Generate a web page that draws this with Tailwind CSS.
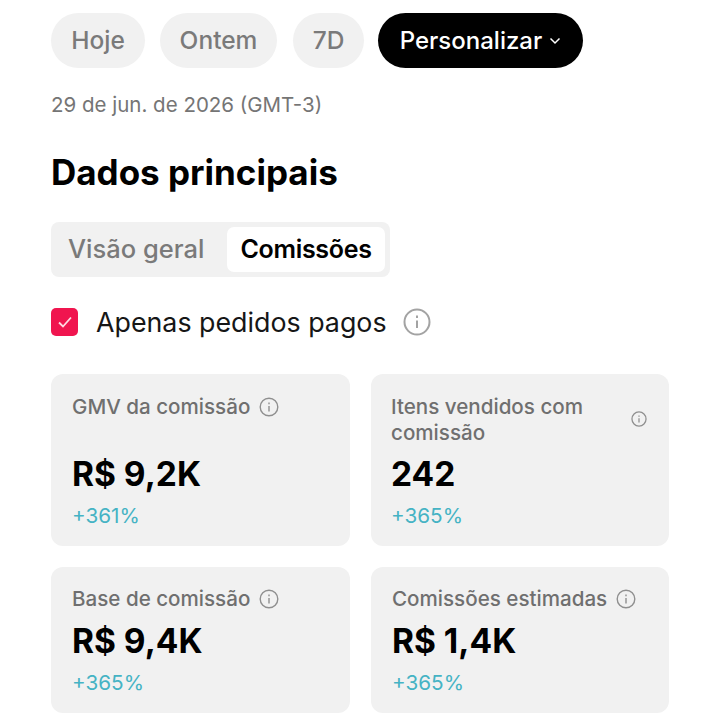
<!DOCTYPE html>
<html lang="en">
<head>
    <meta charset="UTF-8">
    <meta name="viewport" content="width=device-width, initial-scale=1.0">
    <title>Dados principais</title>
    <script src="https://cdn.jsdelivr.net/npm/@tailwindcss/browser@4"></script>
</head>
<body class="bg-white font-['Inter',sans-serif] overflow-hidden">
    <div class="w-[720px] h-[720px] pl-[51px] pr-[51px] pt-[13px] overflow-hidden">
        <!-- Date filters -->
        <div class="flex items-center h-[55px] text-[24.5px] font-medium text-[#7a7a7a]">
            <div class="w-[94px] h-full rounded-full bg-[#f1f1f1] flex items-center justify-center">Hoje</div>
            <div class="w-[117px] h-full rounded-full bg-[#f1f1f1] flex items-center justify-center ml-[15px]">Ontem</div>
            <div class="w-[71px] h-full rounded-full bg-[#f1f1f1] flex items-center justify-center ml-[16px]">7D</div>
            <div class="w-[205px] h-full rounded-full bg-black text-white text-[24px] flex items-center justify-center gap-[7px] ml-[14px]">
                Personalizar
                <svg width="12" height="8" viewBox="0 0 12 8" fill="none" stroke="white" stroke-width="1.5"><path d="M1.5 1.5 6 6l4.5-4.5"/></svg>
            </div>
        </div>
        <p class="mt-[25px] text-[20.5px] leading-[24px] text-[#757575]">29 de jun. de 2026 (GMT-3)</p>

        <h1 class="mt-[35px] text-[35px] leading-[40px] font-bold text-black">Dados principais</h1>

        <!-- Tabs -->
        <div class="mt-[30px] w-[339px] h-[55px] rounded-[8px] bg-[#f1f1f1] flex items-center pl-[17px] pr-[5px] justify-between text-[25.5px] font-medium">
            <span class="text-[#7a7a7a]">Visão geral</span>
            <span class="w-[158px] h-[45px] rounded-[7px] bg-white text-black text-[25px] font-semibold tracking-[-0.3px] flex items-center justify-center">Comissões</span>
        </div>

        <!-- Paid orders only -->
        <div class="mt-[31px] flex items-center h-[28px]">
            <div class="w-[27px] h-[28px] rounded-[5px] bg-[#f0154f] flex items-center justify-center">
                <svg width="16" height="14" viewBox="0 0 16 14" fill="none" stroke="#ffd9e2" stroke-width="1.8"><path d="M2 7.5 6 11.5 14 2.5"/></svg>
            </div>
            <span class="ml-[18px] text-[26.8px] text-[#161616]">Apenas pedidos pagos</span>
            <svg class="ml-[16px]" width="28" height="28" viewBox="0 0 28 28" fill="none" stroke="#a3a3a3" stroke-width="2"><circle cx="14" cy="14" r="12.5"/><path d="M14 12.5v7.5"/><path d="M14 7.5v2.5"/></svg>
        </div>

        <!-- Metric cards -->
        <div class="mt-[38px] grid grid-cols-[299px_298px] gap-x-[21px] gap-y-[21px]">
            <div class="h-[172px] rounded-[12px] bg-[#f1f1f1] pl-[21px] pr-[21px] pt-[20px]">
                <div class="flex items-center h-[26px] text-[20.6px] font-medium text-[#6f6f6f]">
                    GMV da comissão
                    <svg class="ml-[9px]" width="20" height="20" viewBox="0 0 20 20" fill="none" stroke="#8f8f8f" stroke-width="1.4"><circle cx="10" cy="10" r="8.8"/><path d="M10 9v5.5"/><path d="M10 5.5v1.8"/></svg>
                </div>
                <div class="mt-[31px] text-[33.5px] leading-[46px] font-bold text-black">R$ 9,2K</div>
                <div class="mt-[6px] text-[20.7px] leading-[26px] text-[#45b3c4]">+361%</div>
            </div>
            <div class="h-[172px] rounded-[12px] bg-[#f1f1f1] pl-[20px] pr-[21px] pt-[20px]">
                <div class="flex items-center justify-between text-[20.6px] leading-[26px] font-medium text-[#6f6f6f]">
                    <span class="w-[215px]">Itens vendidos com comissão</span>
                    <svg class="-mt-[3px] mr-[1px]" width="16" height="16" viewBox="0 0 20 20" fill="none" stroke="#8f8f8f" stroke-width="1.6"><circle cx="10" cy="10" r="8.8"/><path d="M10 9v5.5"/><path d="M10 5.5v1.8"/></svg>
                </div>
                <div class="mt-[5px] text-[33.5px] leading-[46px] font-bold text-black">242</div>
                <div class="mt-[6px] text-[20.7px] leading-[26px] text-[#45b3c4]">+365%</div>
            </div>
            <div class="h-[146px] rounded-[12px] bg-[#f1f1f1] pl-[21px] pr-[21px] pt-[19px]">
                <div class="flex items-center h-[26px] text-[20.6px] font-medium text-[#6f6f6f]">
                    Base de comissão
                    <svg class="ml-[9px]" width="20" height="20" viewBox="0 0 20 20" fill="none" stroke="#8f8f8f" stroke-width="1.4"><circle cx="10" cy="10" r="8.8"/><path d="M10 9v5.5"/><path d="M10 5.5v1.8"/></svg>
                </div>
                <div class="mt-[6px] text-[33.5px] leading-[46px] font-bold text-black">R$ 9,4K</div>
                <div class="mt-[6px] text-[20.7px] leading-[26px] text-[#45b3c4]">+365%</div>
            </div>
            <div class="h-[146px] rounded-[12px] bg-[#f1f1f1] pl-[21px] pr-[21px] pt-[19px]">
                <div class="flex items-center h-[26px] text-[20.6px] font-medium text-[#6f6f6f]">
                    Comissões estimadas
                    <svg class="ml-[9px]" width="20" height="20" viewBox="0 0 20 20" fill="none" stroke="#8f8f8f" stroke-width="1.4"><circle cx="10" cy="10" r="8.8"/><path d="M10 9v5.5"/><path d="M10 5.5v1.8"/></svg>
                </div>
                <div class="mt-[6px] text-[33.5px] leading-[46px] font-bold text-black">R$ 1,4K</div>
                <div class="mt-[6px] text-[20.7px] leading-[26px] text-[#45b3c4]">+365%</div>
            </div>
        </div>
    </div>
</body>
</html>
